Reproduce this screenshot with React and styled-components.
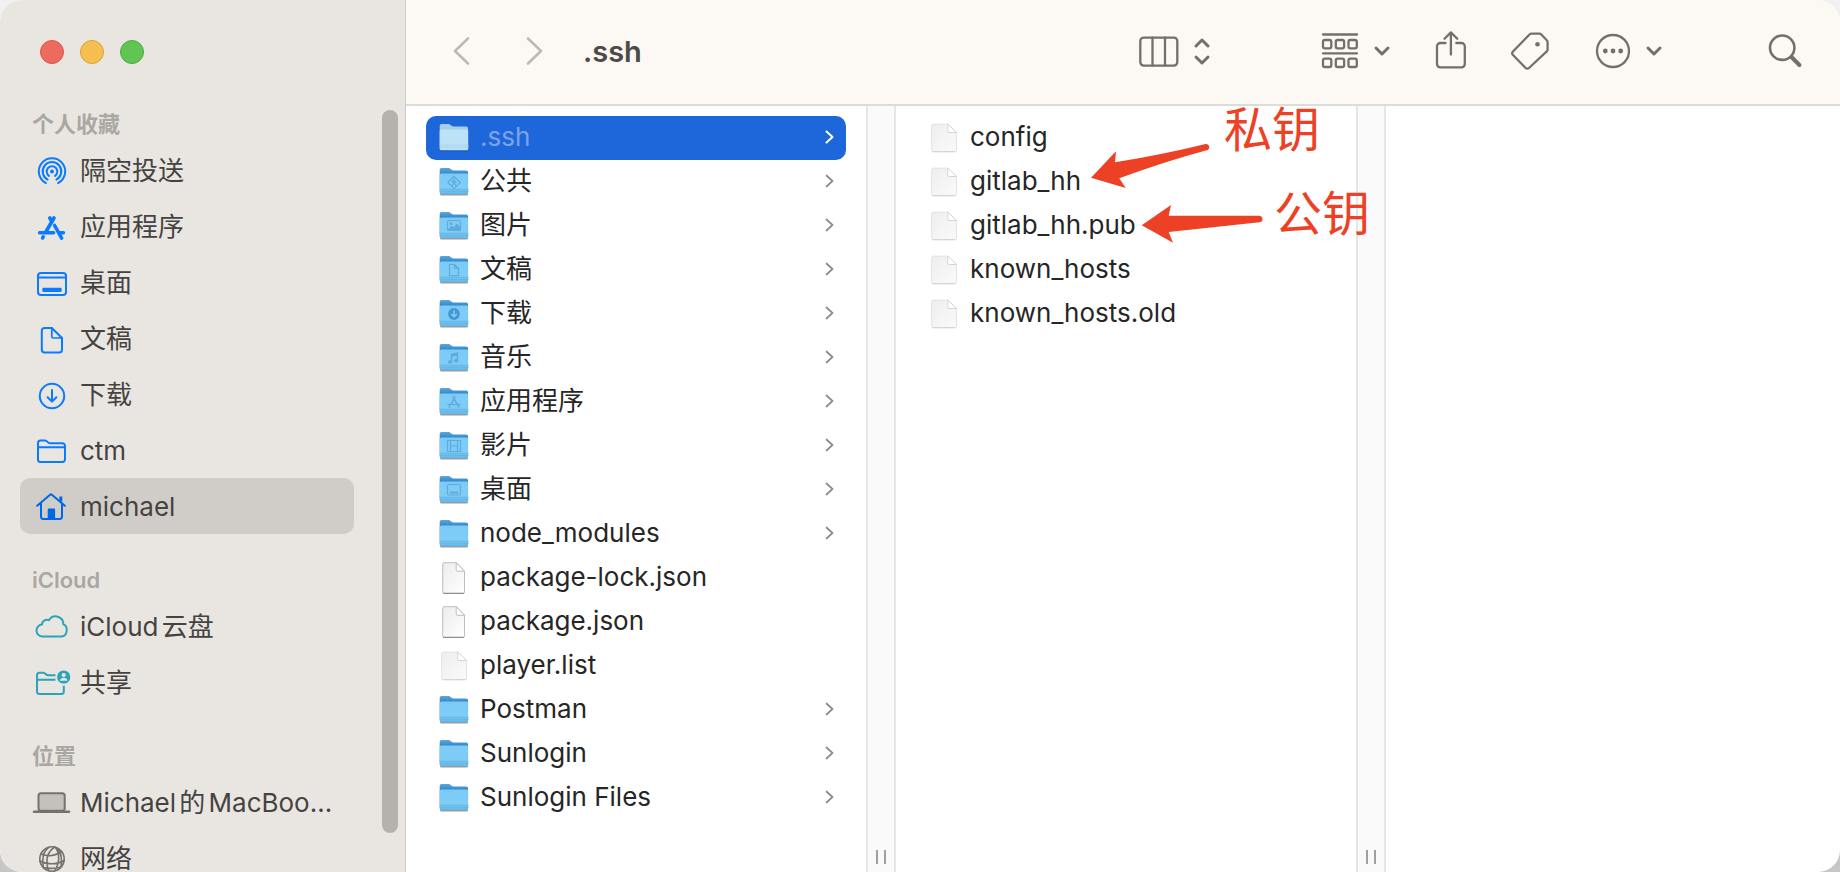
import React from "react";
import styled, { createGlobalStyle } from "styled-components";

const GlobalStyle = createGlobalStyle`
  *, *::before, *::after { box-sizing: border-box; }
  body {
    margin: 0;
    background: linear-gradient(#f1f1f1, #c6c6c6);
    font-family: Inter, "Noto Sans CJK SC", sans-serif;
    text-autospace: normal;
  }
  button { font: inherit; border: 0; background: none; padding: 0; margin: 0; color: inherit; }
  svg { display: block; overflow: visible; }
`;

const Window = styled.div`
  display: flex;
  height: 100vh;
  border-radius: 22px;
  overflow: hidden;
  background: #fff;
`;

const Sidebar = styled.aside`
  display: flex;
  flex: none;
  width: 406px;
  padding-right: 7px;
  background: #e9e6e1;
  border-right: 1px solid #cfccc8;
`;

const SidebarMain = styled.div`
  flex: 1;
  min-width: 0;
  overflow: hidden;
  padding: 40px 28px 0 20px;
`;

const Scrollbar = styled.div`
  display: flex;
  width: 16px;
  padding: 110px 0 39px;
`;

const Thumb = styled.div`
  flex: 1;
  border-radius: 8px;
  background: #b5b2ad;
`;

const TrafficLights = styled.div`
  display: flex;
  gap: 16px;
  height: 38px;
  padding-left: 20px;
`;

const Light = styled.button`
  width: 24px;
  height: 24px;
  border-radius: 50%;
  background: ${(p) => p.$fill};
  border: 1px solid ${(p) => p.$edge};
`;

const GroupTitle = styled.h2`
  margin: 28px 0 0;
  padding-left: 12px;
  font-size: 22px;
  line-height: 36px;
  font-weight: 600;
  color: #aaa7a2;
`;

const PlaceList = styled.ul`
  list-style: none;
  margin: 0;
  padding: 0;
`;

const Place = styled.a`
  display: flex;
  align-items: center;
  gap: 10px;
  height: 56px;
  padding: 2px 14px 0;
  border-radius: 10px;
  font-size: 26px;
  line-height: 36px;
  color: #454341;
  text-decoration: none;
  white-space: nowrap;
  background: ${(p) => (p.$active ? "#d0cdc8" : "transparent")};
`;

const PlaceIcon = styled.svg`
  flex: none;
  width: 36px;
  height: 32px;
  fill: none;
  stroke: ${(p) => p.$tint};
  stroke-width: 2;
  stroke-linecap: round;
  stroke-linejoin: round;
`;

const Main = styled.main`
  display: flex;
  flex-direction: column;
  flex: 1;
  min-width: 0;
`;

const Toolbar = styled.header`
  display: flex;
  align-items: center;
  flex: none;
  height: 106px;
  padding: 0 38px 2px 47px;
  background: #fcf9f4;
  border-bottom: 2px solid #dedcd9;
  color: #73706b;
`;

const Navigation = styled.nav`
  display: flex;
  gap: 56px;
  color: #bdbab5;
`;

const Title = styled.h1`
  margin: 0 0 0 40px;
  padding-top: 2px;
  font-size: 29px;
  line-height: 40px;
  font-weight: 600;
  color: #4d4b48;
`;

const Tools = styled.div`
  display: flex;
  align-items: center;
  margin-left: auto;
`;

const ToolButton = styled.button`
  display: flex;
  align-items: center;
  gap: 15px;
  margin-right: ${(p) => p.$after || 0}px;
`;

const Glyph = styled.svg`
  flex: none;
  fill: none;
  stroke: currentColor;
  stroke-width: ${(p) => p.$weight || 2.3};
  stroke-linecap: round;
  stroke-linejoin: round;
`;

const Columns = styled.div`
  position: relative;
  display: flex;
  flex: 1;
  min-height: 0;
`;

const Column = styled.ul`
  flex: none;
  width: 460px;
  margin: 0;
  padding: 10px 20px;
  list-style: none;
`;

const EmptyColumn = styled.div`
  flex: 1;
`;

const FileRow = styled.button`
  display: flex;
  align-items: center;
  gap: 11px;
  width: 100%;
  height: 44px;
  padding: 0 12px 0 13px;
  border-radius: 10px;
  text-align: left;
  font-size: 26px;
  line-height: 36px;
  color: ${(p) => (p.$selected ? "#7ba3ea" : "#262626")};
  background: ${(p) => (p.$selected ? "#1e67da" : "transparent")};
`;

const FileName = styled.span`
  flex: 1;
  min-width: 0;
  padding-bottom: 2px;
  white-space: nowrap;
`;

const Arrow = styled.svg`
  flex: none;
  margin-bottom: 2px;
  fill: none;
  stroke: ${(p) => (p.$selected ? "#fff" : "#8b8b8b")};
  stroke-width: ${(p) => (p.$selected ? 2 : 1.7)};
  stroke-linecap: round;
  stroke-linejoin: round;
`;

const Splitter = styled.div`
  display: flex;
  flex: none;
  align-items: flex-end;
  justify-content: center;
  width: 30px;
  padding-bottom: 8px;
  background: #fafafa;
  border: solid #e6e6e6;
  border-width: 0 2px;
`;

const Grip = styled.div`
  width: 10px;
  height: 14px;
  border: solid #a0a0a0;
  border-width: 0 2px;
`;

const Pointers = styled.svg`
  position: absolute;
  left: 674px;
  top: 34px;
  fill: #ec4125;
`;

const Note = styled.span`
  position: absolute;
  left: ${(p) => p.$x}px;
  top: ${(p) => p.$y}px;
  font-size: 48px;
  line-height: 46px;
  font-weight: 400;
  color: #ec4125;
`;

const BLUE = "#0a7aff";
const TEAL = "#2ba3b8";
const GREY = "#75726e";

const placeIcons = {
  airdrop: (
    <>
      <path d="M11.9 28.1a13.2 13.2 0 1 1 12.2 0" />
      <path d="M13.6 24.6a9.3 9.3 0 1 1 8.8 0" />
      <path d="M15 20.9a5.3 5.3 0 1 1 6 0" />
      <circle cx="18" cy="16.5" r="1.9" fill={BLUE} stroke="none" />
    </>
  ),
  apps: (
    <g strokeWidth="3.6">
      <path d="M20 7 11.5 21.5M15.8 7l1.6 2.8M5.6 21.8h14M25.6 21.8h3.8M20.6 14.5l7 12.6M9.2 25.9l-.6 1.1" />
    </g>
  ),
  desktop: (
    <>
      <rect x="4" y="6" width="28" height="22" rx="3" />
      <path d="M4 10.6h28" />
      <rect x="8.4" y="20.8" width="19.2" height="4.2" rx="1" fill={BLUE} stroke="none" />
    </>
  ),
  document: (
    <>
      <path d="M10.5 5h7.3L28 15v11.8a2.7 2.7 0 0 1-2.7 2.7H10.5A2.7 2.7 0 0 1 7.8 26.8V7.7A2.7 2.7 0 0 1 10.5 5Z" />
      <path d="M17.8 5v8.5a1.5 1.5 0 0 0 1.5 1.5H28" strokeWidth="1.7" />
    </>
  ),
  download: (
    <>
      <circle cx="18" cy="17" r="12.2" />
      <path d="M18 11v11M13.6 18.2 18 22.6l4.4-4.4" />
    </>
  ),
  folder: (
    <path d="M4 12.2h27M4 8a2.5 2.5 0 0 1 2.5-2.5h4.7c2 0 2.6 2.7 4.6 2.7h12.7a2.5 2.5 0 0 1 2.5 2.5v13.8a2.5 2.5 0 0 1-2.5 2.5h-22A2.5 2.5 0 0 1 4 24.5Z" />
  ),
  home: (
    <>
      <path d="M3.2 14.8 15.8 3.9a1.8 1.8 0 0 1 2.4 0l12.6 10.9M7 12v13.5A2.5 2.5 0 0 0 9.5 28h16a2.5 2.5 0 0 0 2.5-2.5V12" />
      <path d="M26.8 5.5v5" strokeWidth="3" strokeLinecap="butt" />
      <path d="M13.7 28V18.4a1 1 0 0 1 1-1h5.4a1 1 0 0 1 1 1V28Z" fill="#0068e6" stroke="none" />
    </>
  ),
  cloud: (
    <path d="M9 25.5a6 6 0 0 1-1-12c-.2-3.2 3.6-5.8 6.9-4.3 4.4-6.8 14.5-4 14.5 4.2 4.9 1.6 4.7 12.1-2.6 12.1Z" />
  ),
  shared: (
    <>
      <path d="M21.5 8.3h-7.5c-2 0-2.6-2.6-4.6-2.6H5.5A2.5 2.5 0 0 0 3 8.2v16.3A2.5 2.5 0 0 0 5.5 27h21.8a2.5 2.5 0 0 0 2.5-2.5v-5.7M3 12.8h18.5" strokeLinecap="butt" />
      <circle cx="29.7" cy="10" r="6.6" fill={TEAL} stroke="none" />
      <circle cx="29.7" cy="8" r="2.1" fill="#e9e6e1" stroke="none" />
      <path d="M25.9 13.8c.2-4 7.4-4 7.6 0Z" fill="#e9e6e1" stroke="none" />
    </>
  ),
  laptop: (
    <>
      <rect x="4.5" y="6.3" width="26.2" height="17.5" rx="2.5" fill="#c4c0bb" />
      <path d="M0 24.7h35" strokeWidth="2.6" />
    </>
  ),
  network: (
    <g strokeWidth="1.6">
      <circle cx="18" cy="16" r="12.2" />
      <path d="M20.5 4c-7 5-9.5 13-6 23.800M21 4c5 6 5 16-.5 23.900M7 11c6 2.500 14 2 20.500-2.500M6 18c6 3.500 17 4 24-.5M9.500 24.500c5 1 13 1 18-.8M14.500 4.500C10 8 7.500 14 9.500 24.500M22.500 5c4 3 6 8 4.500 18.500" />
    </g>
  ),
};

const emblems = {
  share: <path d="M15 9.3 21.2 15.5 15 21.7 8.8 15.5ZM15 12v3.500M12.800 14.800l2.200-1.200 2 1.700M15 15.500l-1.600 3M15 15.500l1.600 2.800" />,
  picture: (
    <>
      <rect x="8.5" y="9.5" width="13" height="10" rx="1.5" />
      <path d="m9 19 3.800-3.600 2 1.700 3-3.600 3.400 3.500V19Z" fill="#5fabdd" />
      <circle cx="12" cy="12.7" r=".8" fill="#5fabdd" />
    </>
  ),
  document: <path d="M11 9.500h4.500l4 4v7.200H10.500V9.500ZM15.500 9.500v4h4" />,
  download: (
    <>
      <circle cx="15" cy="15" r="5.9" fill="#4398d3" stroke="none" />
      <path d="M15 12v5.500M12.700 15.500 15 17.800l2.300-2.300" stroke="#86cdf6" strokeWidth="1.5" />
    </>
  ),
  music: (
    <>
      <path d="M12.500 19v-7.500l6-1.500v7.700M12.500 13l6-1.500" strokeWidth="1.5" />
      <ellipse cx="11.2" cy="19" rx="1.6" ry="1.2" fill="#5fabdd" />
      <ellipse cx="17.2" cy="17.8" rx="1.6" ry="1.2" fill="#5fabdd" />
    </>
  ),
  apps: <path d="m16 10-4.800 8.500M14 10l5.800 10M9 17.500h7.500M18.800 17.500H21M10.500 19.800l-.2.500" strokeWidth="1.5" />,
  movie: <path d="M8.500 9.500h13v11h-13ZM11.500 9.500v11M18.500 9.500v11M11.500 15h7" />,
  desktop: (
    <>
      <rect x="8.5" y="9.5" width="13" height="10.5" rx="1.5" />
      <path d="M11.500 17.500h7" strokeWidth="1.8" />
    </>
  ),
};

function FolderIcon({ emblem, selected }) {
  return (
    <Glyph width="30" height="30" viewBox="0 0 30 30" $weight={1.2}>
      <g stroke="none">
        <rect x="1" y="22" width="28" height="6.4" rx="1.5" fill="#000" opacity={selected ? 0.15 : 0.4} />
        <path
          d="M.7 2.700A1.700 1.700 0 0 1 2.400 1h7c2.300 0 2.600 2.400 5 2.400h12.900A1.700 1.700 0 0 1 29 5.100V22H.7Z"
          fill={selected ? "#a3cfea" : "url(#folder-back)"}
        />
        <path
          d="M.7 8a1.500 1.500 0 0 1 1.500-1.500h25.500A1.500 1.500 0 0 1 29.200 8v17.800a1.500 1.500 0 0 1-1.500 1.500H2.200a1.500 1.500 0 0 1-1.500-1.500Z"
          fill={selected ? "#bce2f7" : "url(#folder-front)"}
        />
        <path d="M.7 22.300h28.500M.7 24.300h28.500" stroke={selected ? "#a5d2ec" : "#5db0e2"} strokeWidth=".8" />
      </g>
      <g stroke="#5fabdd">{emblem ? emblems[emblem] : null}</g>
    </Glyph>
  );
}

function DocumentIcon() {
  return (
    <Glyph width="30" height="32" viewBox="0 0 30 32" $weight={1}>
      <path d="M3.700 2.200A1.500 1.500 0 0 1 5 .7h12.200l8.300 8.700v20.500a1.500 1.500 0 0 1-1.500 1.500H5.200a1.500 1.500 0 0 1-1.500-1.500Z" fill="url(#paper)" stroke="#bdbdbd" />
      <path d="M4.500 31.300h20" stroke="#858585" />
      <path d="M17.200 1v6.800a1.500 1.500 0 0 0 1.500 1.500h6.600Z" fill="#fff" stroke="#bdbdbd" />
    </Glyph>
  );
}

function PlainFileIcon() {
  return (
    <Glyph width="30" height="30" viewBox="0 0 30 30" $weight={1}>
      <path d="M2.700 2.700a1.500 1.500 0 0 1 1.500-1.500h14.300l9 8.500v17.300a1.500 1.500 0 0 1-1.500 1.500H4.200a1.500 1.500 0 0 1-1.500-1.500Z" fill="url(#plain)" stroke="#e3e3e3" />
      <path d="M4 28.800h22" stroke="#cfcfcf" />
      <path d="M18.700 1.300v6.700a1.500 1.500 0 0 0 1.500 1.500h7.100Z" fill="#fff" stroke="#d4d4d4" />
    </Glyph>
  );
}

function Gradients() {
  return (
    <svg width="0" height="0" aria-hidden="true" style={{ position: "absolute" }}>
      <defs>
        <linearGradient id="folder-back" x1="0" y1="0" x2="0" y2="1">
          <stop offset="0" stopColor="#5aa9dc" />
          <stop offset=".3" stopColor="#2f83c6" />
        </linearGradient>
        <linearGradient id="folder-front" x1="0" y1="0" x2="0" y2="1">
          <stop offset="0" stopColor="#7ccbf7" />
          <stop offset=".72" stopColor="#7fccf6" />
          <stop offset="1" stopColor="#63b5e6" />
        </linearGradient>
        <linearGradient id="paper" x1="0" y1="0" x2="1" y2="1">
          <stop offset="0" stopColor="#ececec" />
          <stop offset="1" stopColor="#fff" />
        </linearGradient>
        <linearGradient id="plain" x1="0" y1="0" x2="1" y2="1">
          <stop offset="0" stopColor="#eeeeee" />
          <stop offset="1" stopColor="#fafafa" />
        </linearGradient>
      </defs>
    </svg>
  );
}

const groups = [
  {
    title: "个人收藏",
    tint: BLUE,
    places: [
      ["airdrop", "隔空投送"],
      ["apps", "应用程序"],
      ["desktop", "桌面"],
      ["document", "文稿"],
      ["download", "下载"],
      ["folder", "ctm"],
      ["home", "michael"],
    ],
  },
  {
    title: "iCloud",
    tint: TEAL,
    places: [
      ["cloud", "iCloud云盘"],
      ["shared", "共享"],
    ],
  },
  {
    title: "位置",
    tint: GREY,
    places: [
      ["laptop", "Michael的MacBoo…"],
      ["network", "网络"],
    ],
  },
];

const homeFiles = [
  { name: ".ssh", kind: "folder", selected: true },
  { name: "公共", kind: "folder", emblem: "share" },
  { name: "图片", kind: "folder", emblem: "picture" },
  { name: "文稿", kind: "folder", emblem: "document" },
  { name: "下载", kind: "folder", emblem: "download" },
  { name: "音乐", kind: "folder", emblem: "music" },
  { name: "应用程序", kind: "folder", emblem: "apps" },
  { name: "影片", kind: "folder", emblem: "movie" },
  { name: "桌面", kind: "folder", emblem: "desktop" },
  { name: "node_modules", kind: "folder" },
  { name: "package-lock.json", kind: "document" },
  { name: "package.json", kind: "document" },
  { name: "player.list", kind: "plain" },
  { name: "Postman", kind: "folder" },
  { name: "Sunlogin", kind: "folder" },
  { name: "Sunlogin Files", kind: "folder" },
];

const sshFiles = ["config", "gitlab_hh", "gitlab_hh.pub", "known_hosts", "known_hosts.old"].map((name) => ({
  name,
  kind: "plain",
}));

function FileColumn({ files }) {
  return (
    <Column>
      {files.map(({ name, kind, emblem, selected }) => (
        <li key={name}>
          <FileRow type="button" $selected={selected}>
            {kind === "folder" && <FolderIcon emblem={emblem} selected={selected} />}
            {kind === "document" && <DocumentIcon />}
            {kind === "plain" && <PlainFileIcon />}
            <FileName>{name}</FileName>
            {kind === "folder" && (
              <Arrow width="9" height="14" viewBox="0 0 9 14" $selected={selected}>
                <path d="m1.500 1.500 6 5.500-6 5.500" />
              </Arrow>
            )}
          </FileRow>
        </li>
      ))}
    </Column>
  );
}

function DownChevron() {
  return (
    <Glyph width="16" height="10" viewBox="0 0 16 10" $weight={3}>
      <path d="m2 2 6 6 6-6" />
    </Glyph>
  );
}

export default function App() {
  return (
    <>
      <GlobalStyle />
      <Gradients />
      <Window>
        <Sidebar>
          <SidebarMain>
            <TrafficLights>
              <Light type="button" aria-label="关闭" $fill="#ed6a5f" $edge="#d9554a" />
              <Light type="button" aria-label="最小化" $fill="#f5bf4f" $edge="#d9a23c" />
              <Light type="button" aria-label="缩放" $fill="#61c554" $edge="#4dab41" />
            </TrafficLights>
            {groups.map((group) => (
              <section key={group.title}>
                <GroupTitle>{group.title}</GroupTitle>
                <PlaceList>
                  {group.places.map(([icon, label]) => (
                    <li key={label}>
                      <Place href="#" $active={label === "michael"}>
                        <PlaceIcon viewBox="0 0 36 32" $tint={icon === "home" ? "#0068e6" : group.tint}>
                          {placeIcons[icon]}
                        </PlaceIcon>
                        {label}
                      </Place>
                    </li>
                  ))}
                </PlaceList>
              </section>
            ))}
          </SidebarMain>
          <Scrollbar>
            <Thumb />
          </Scrollbar>
        </Sidebar>

        <Main>
          <Toolbar>
            <Navigation>
              <ToolButton type="button" aria-label="后退">
                <Glyph width="17" height="28" viewBox="0 0 17 28" $weight={2.6}>
                  <path d="M15 1.500 2 14l13 12.500" />
                </Glyph>
              </ToolButton>
              <ToolButton type="button" aria-label="前进">
                <Glyph width="17" height="28" viewBox="0 0 17 28" $weight={2.6}>
                  <path d="m2 1.500 13 12.500L2 26.500" />
                </Glyph>
              </ToolButton>
            </Navigation>
            <Title>.ssh</Title>
            <Tools>
              <ToolButton type="button" aria-label="显示方式" $after={111}>
                <Glyph width="40" height="32" viewBox="0 0 40 32">
                  <rect x="1.3" y="2.6" width="37" height="28" rx="3.5" />
                  <path d="M13.500 2.600v28M26 2.600v28" />
                </Glyph>
                <Glyph width="16" height="28" viewBox="0 0 16 28" $weight={3}>
                  <path d="m2 9 6-6 6 6M2 20l6 6 6-6" />
                </Glyph>
              </ToolButton>
              <ToolButton type="button" aria-label="分组" $after={45}>
                <Glyph width="38" height="36" viewBox="0 0 38 36">
                  <path d="M2 1.500h34M2 20.300h34" />
                  {[2, 14.8, 27.5].map((x) => (
                    <g key={x}>
                      <rect x={x} y="7" width="8.3" height="8.3" rx="1.8" />
                      <rect x={x} y="25.7" width="8.3" height="8.3" rx="1.8" />
                    </g>
                  ))}
                </Glyph>
                <DownChevron />
              </ToolButton>
              <ToolButton type="button" aria-label="共享" $after={44}>
                <Glyph width="32" height="38" viewBox="0 0 32 38">
                  <path d="M10.500 11H5.300A3.300 3.300 0 0 0 2 14.300v17.700A3.300 3.300 0 0 0 5.300 35.300h21.200a3.300 3.300 0 0 0 3.300-3.300V14.300A3.300 3.300 0 0 0 26.500 11h-5.200M15.900 22.500V.7M9.500 6.700l6.400-6.300 6.400 6.300" />
                </Glyph>
              </ToolButton>
              <ToolButton type="button" aria-label="标签" $after={46}>
                <Glyph width="38" height="38" viewBox="0 0 38 38">
                  <path d="M2 19.500 18.500 2.500a3 3 0 0 1 2-.8h7.800a3 3 0 0 1 2 .8l5.500 5.700a3 3 0 0 1 .8 2v7.200a3 3 0 0 1-.8 2L18 36a2.400 2.400 0 0 1-3.400 0L2 23a2.500 2.500 0 0 1 0-3.500Z" />
                  <circle cx="26.5" cy="12.3" r="2.3" fill="currentColor" stroke="none" />
                </Glyph>
              </ToolButton>
              <ToolButton type="button" aria-label="更多" $after={106}>
                <Glyph width="36" height="36" viewBox="0 0 36 36">
                  <circle cx="18" cy="18" r="16" />
                  <g fill="currentColor" stroke="none">
                    <circle cx="10.3" cy="18" r="2.4" />
                    <circle cx="18" cy="18" r="2.4" />
                    <circle cx="25.7" cy="18" r="2.4" />
                  </g>
                </Glyph>
                <DownChevron />
              </ToolButton>
              <ToolButton type="button" aria-label="搜索">
                <Glyph width="34" height="34" viewBox="0 0 34 34">
                  <circle cx="14.2" cy="13.7" r="12.2" strokeWidth="2.6" />
                  <path d="m23.500 23 7.900 8" strokeWidth="4" />
                </Glyph>
              </ToolButton>
            </Tools>
          </Toolbar>

          <Columns>
            <FileColumn files={homeFiles} />
            <Splitter>
              <Grip />
            </Splitter>
            <FileColumn files={sshFiles} />
            <Splitter>
              <Grip />
            </Splitter>
            <EmptyColumn />
            <Pointers width="190" height="110" viewBox="1080 140 190 110" aria-hidden="true">
              <path d="M1091 177.700 1116 151.300 1115 162.300Q1165 154 1205.500 143.900C1210 143.500 1210.500 149.500 1206.700 150.300Q1165 161.500 1119.300 178.300L1125.700 188Z" />
              <path d="M1141.700 225.300 1171 205 1168.700 215.700H1259.500C1263.500 216.500 1263.500 221.800 1259.500 222.300L1168.700 232 1173 242.700Z" />
            </Pointers>
            <Note $x={818} $y={1}>私钥</Note>
            <Note $x={868} $y={85}>公钥</Note>
          </Columns>
        </Main>
      </Window>
    </>
  );
}
